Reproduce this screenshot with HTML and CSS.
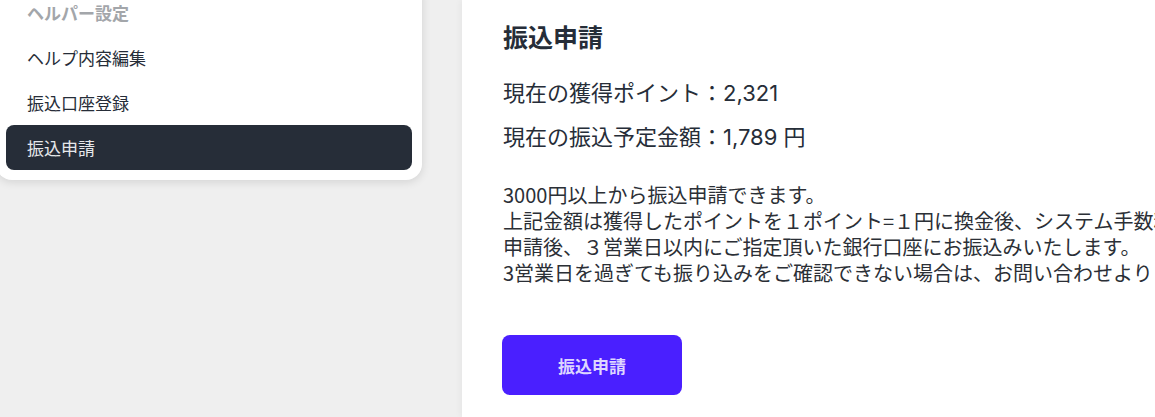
FILE: index.html
```html
<!DOCTYPE html>
<html lang="ja">
<head>
<meta charset="utf-8">
<link rel="stylesheet" href="styles.css">
</head>
<body>
<div class="page">
  <aside class="side">
    <nav class="card">
      <div class="nav-head">ヘルパー設定</div>
      <a class="nav-item">ヘルプ内容編集</a>
      <a class="nav-item">振込口座登録</a>
      <a class="nav-item active">振込申請</a>
    </nav>
  </aside>
  <main class="main">
    <h1 class="title">振込申請</h1>
    <p class="stat">現在の獲得ポイント：2,321</p>
    <p class="stat">現在の振込予定金額：1,789 円</p>
    <div class="notes">
      <p>3000円以上から振込申請できます。</p>
      <p>上記金額は獲得したポイントを１ポイント=１円に換金後、システム手数料を差し引いた金額です。</p>
      <p>申請後、３営業日以内にご指定頂いた銀行口座にお振込みいたします。</p>
      <p>3営業日を過ぎても振り込みをご確認できない場合は、お問い合わせよりご連絡ください。</p>
    </div>
    <button class="btn">振込申請</button>
  </main>
</div>
</body>
</html>
```
FILE: styles.css
```css
* { box-sizing: border-box; }
html, body { margin: 0; padding: 0; }
body {
  background: #efefef;
  font-family: Inter, "Noto Sans CJK JP", sans-serif;
  color: #262d38;
  overflow: hidden;
  height: 417px;
}
.page {
  display: flex;
  height: 417px;
}
.side {
  width: 462px;
  flex: none;
}
.card {
  display: flex;
  flex-direction: column;
  width: 426px;
  margin-left: -4px;
  margin-top: -20px;
  padding: 10px;
  background: #fff;
  border-radius: 16px;
  box-shadow: 0 2px 10px rgba(0,0,0,0.12);
}
.nav-head, .nav-item {
  height: 45px;
  display: flex;
  align-items: center;
  padding-left: 21px;
  font-family: "Noto Sans CJK JP", sans-serif;
  font-size: 17px;
  border-radius: 8px;
}
.nav-head {
  color: #a3a6aa;
  font-weight: 700;
}
.nav-item { color: #262d38; }
.nav-item.active {
  background: #262d38;
  color: #e6e8eb;
}
.main {
  flex: 1;
  min-width: 0;
  background: #fff;
  padding: 21px 0 0 41px;
  white-space: nowrap;
  overflow: hidden;
  box-shadow: -2px 0 6px rgba(0,0,0,0.04);
}
.title {
  margin: 0 0 27px;
  font-family: "Noto Sans CJK JP", sans-serif;
  font-size: 25px;
  line-height: 30px;
  font-weight: 700;
}
.stat {
  margin: 0 0 14px;
  font-size: 22px;
  line-height: 30px;
}
.stat + .stat { margin-bottom: 0; }
.notes {
  margin-top: 30px;
  font-family: "Noto Sans CJK JP", sans-serif;
  font-size: 20px;
  line-height: 26px;
  color: #2b2f36;
}
.notes p { margin: 0; }
.btn {
  display: block;
  margin-top: 49px;
  margin-left: -1px;
  width: 180px;
  height: 60px;
  border: none;
  border-radius: 8px;
  background: #4a1fff;
  color: #ddd6ff;
  font-family: "Noto Sans CJK JP", sans-serif;
  font-size: 17px;
  font-weight: 700;
}
```
